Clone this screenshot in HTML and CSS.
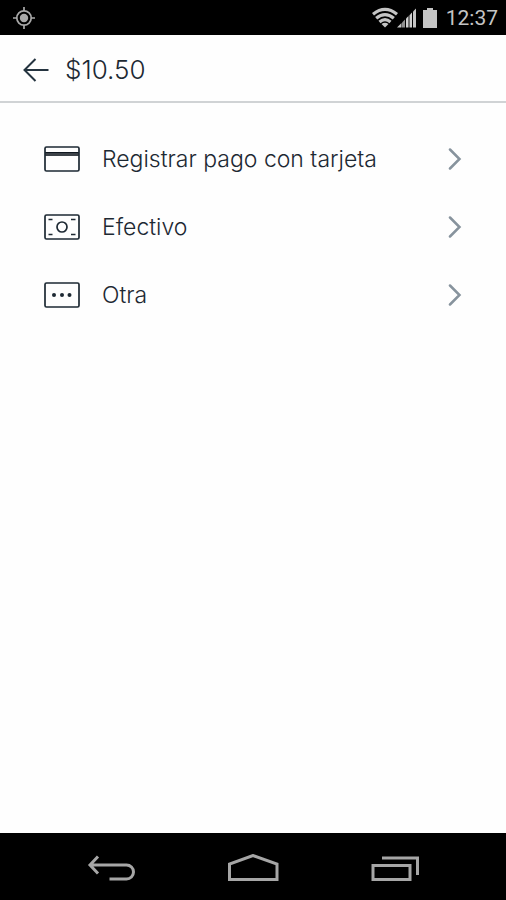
FILE: index.html
```html
<!DOCTYPE html>
<html lang="es">
<head>
<meta charset="utf-8">
<meta name="viewport" content="width=device-width, initial-scale=1">
<title>Pago</title>
<link rel="stylesheet" href="styles.css">
</head>
<body>
<div class="status">
  <svg class="gps" width="22" height="22" viewBox="0 0 22 22" aria-hidden="true">
    <circle cx="11" cy="11" r="7.2" fill="none" stroke="#a9a9a9" stroke-width="1.7"/>
    <circle cx="11" cy="11" r="4.2" fill="#a9a9a9"/>
    <path d="M11 0v4M11 18v4M0 11h4M18 11h4" stroke="#a9a9a9" stroke-width="1.7"/>
  </svg>
  <svg class="signals" width="66" height="22" viewBox="0 0 66 22" aria-hidden="true">
    <g fill="none" stroke="#c4c4c4" stroke-width="3.2">
      <path d="M1 7.3Q13 -2.5 25 7.3"/>
      <path d="M4.200 11.300Q13 3.800 21.800 11.300"/>
      <path d="M7.500 15Q13 10.300 18.500 15"/>
    </g>
    <path d="M9.500 17Q13 14.500 16.500 17L13 20.500z" fill="#c4c4c4"/>
    <path d="M25 20.500L29.500 16v4.500z" fill="#c4c4c4"/>
    <path d="M30 15.500l3-3v8h-3z" fill="#909090"/>
    <path d="M34 11.500l2-2v11h-2z" fill="#d0d0d0"/>
    <path d="M36 9.500l2-2v13h-2z" fill="#707070"/>
    <path d="M38 7.500l2-2v15h-2z" fill="#d0d0d0"/>
    <path d="M41 4.500l3-3v19h-3z" fill="#c4c4c4"/>
    <path d="M55 1h6v2h4v18H51V3h4z" fill="#c4c4c4"/>
  </svg>
  <span class="clock">12:37</span>
</div>
<header class="header">
  <button class="back" type="button" aria-label="Atrás">
    <svg width="26" height="24" viewBox="0 0 26 24" aria-hidden="true"><path d="M25.500 12H1.500M12.500 1L1.500 12l11 11" fill="none" stroke="#253440" stroke-width="2"/></svg>
  </button>
  <h1 class="amount">$10.50</h1>
</header>
<main class="options">
  <button class="option" type="button">
    <svg width="36" height="26" viewBox="0 0 36 26" aria-hidden="true"><path d="M1 6h34v4H1z" fill="#3c4248"/><path d="M1 6.500h34" stroke="#101820"/><rect x="1" y="1" width="34" height="24" rx="1.500" fill="none" stroke="#1d2933" stroke-width="1.700"/></svg>
    <span class="label">Registrar pago con tarjeta</span>
    <svg class="chevron" width="14" height="22" viewBox="0 0 14 22" aria-hidden="true"><path d="M2 1.500L11.500 11 2 20.500"/></svg>
  </button>
  <button class="option" type="button">
    <svg width="36" height="26" viewBox="0 0 36 26" aria-hidden="true"><g fill="none" stroke="#1d2933" stroke-width="1.700"><rect x="1" y="1" width="34" height="24" rx="1.500"/><circle cx="18" cy="13" r="5"/><path d="M4.500 5.500h4M27 5.500h4.500M4.500 20.500h4M27 20.500h4.500"/></g></svg>
    <span class="label">Efectivo</span>
    <svg class="chevron" width="14" height="22" viewBox="0 0 14 22" aria-hidden="true"><path d="M2 1.500L11.500 11 2 20.500"/></svg>
  </button>
  <button class="option" type="button">
    <svg width="36" height="26" viewBox="0 0 36 26" aria-hidden="true"><rect x="1" y="1" width="34" height="24" rx="1.500" fill="none" stroke="#1d2933" stroke-width="1.700"/><g fill="#1d2933"><circle cx="10" cy="13" r="2"/><circle cx="18" cy="13" r="2"/><circle cx="25.500" cy="13" r="2"/></g></svg>
    <span class="label">Otra</span>
    <svg class="chevron" width="14" height="22" viewBox="0 0 14 22" aria-hidden="true"><path d="M2 1.500L11.500 11 2 20.500"/></svg>
  </button>
</main>
<nav class="nav" aria-label="Sistema">
  <button type="button" aria-label="Volver">
    <svg width="52" height="28" viewBox="0 0 52 28" aria-hidden="true"><path d="M4 11h36.500a7 7 0 0 1 0 14H23.500M12 2.500L4 11l8 8.500"/></svg>
  </button>
  <button type="button" aria-label="Inicio">
    <svg width="52" height="28" viewBox="0 0 52 28" aria-hidden="true"><path d="M2.500 25.500V10L26 1.500 50 10v15.500z"/></svg>
  </button>
  <button type="button" aria-label="Recientes">
    <svg width="52" height="28" viewBox="0 0 52 28" aria-hidden="true"><path d="M5 11.500h37v14H5zM14 4h35.500v17"/></svg>
  </button>
</nav>
</body>
</html>
```
FILE: styles.css
```css
* {
  box-sizing: border-box;
}

body {
  margin: 0;
  min-height: 100vh;
  display: flex;
  flex-direction: column;
  background: #fefefe;
  color: #1d2933;
  font-family: Inter, "Liberation Sans", sans-serif;
}

button {
  margin: 0;
  padding: 0;
  border: 0;
  background: none;
  color: inherit;
  font: inherit;
}

svg {
  display: block;
  flex: none;
}

.status {
  display: flex;
  align-items: center;
  height: 35px;
  padding: 0 8px 0 13px;
  background: #000;
}

.signals {
  margin-left: auto;
}

.clock {
  margin-left: 8px;
  color: #c4c4c4;
  font: 21px/36px Roboto, sans-serif;
}

.header {
  display: flex;
  align-items: center;
  gap: 16px;
  height: 68px;
  padding: 4px 23px 0;
  border-bottom: 2px solid #d0d3d5;
}

.amount {
  margin: 0;
  font-size: 26px;
  line-height: 32px;
  font-weight: 300;
}

.options {
  flex: 1;
  padding: 22px 44px;
}

.option {
  display: flex;
  align-items: center;
  width: 100%;
  height: 68px;
  text-align: left;
}

.label {
  flex: 1;
  margin-left: 22px;
  font-size: 23px;
  line-height: 28px;
  font-weight: 300;
}

.chevron {
  fill: none;
  stroke: #87939d;
  stroke-width: 2.5;
  stroke-linecap: round;
}

.nav {
  display: grid;
  grid-template-columns: repeat(3, 1fr);
  height: 67px;
  padding: 2px 41px 0;
  background: #000;
}

.nav button {
  display: flex;
  align-items: center;
  justify-content: center;
}

.nav svg {
  fill: none;
  stroke: #a6a6a6;
  stroke-width: 3;
}
```
